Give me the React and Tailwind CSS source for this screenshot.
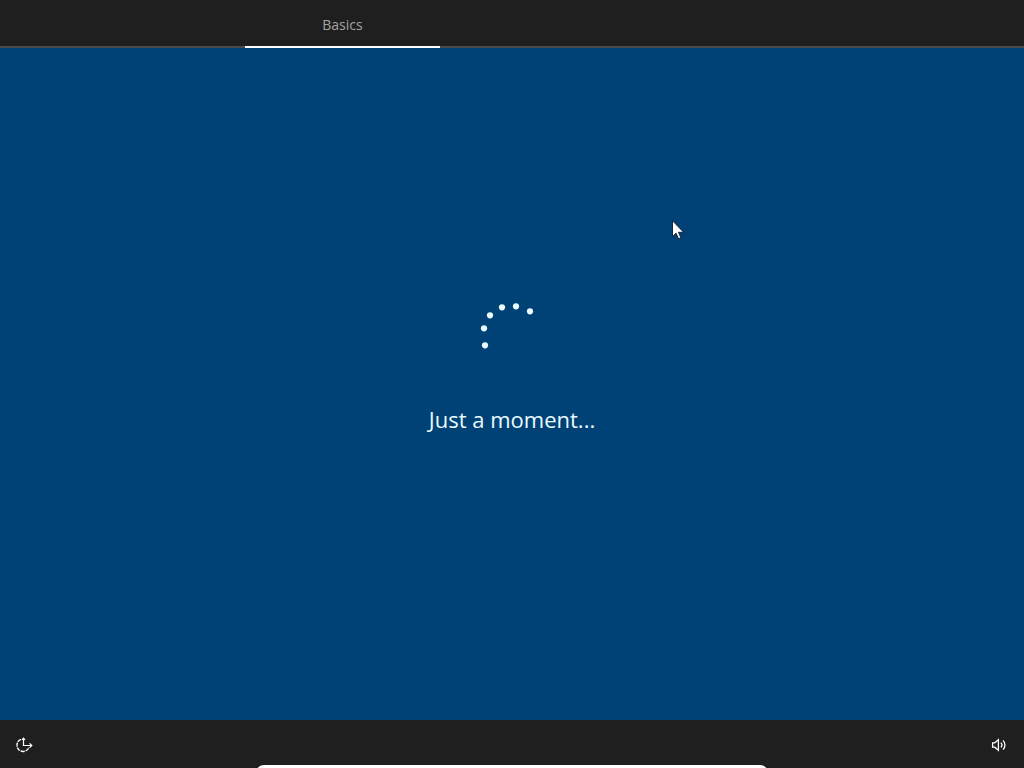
import React from 'react';

const dots = [
    { x: 15, y: 50 },
    { x: 14, y: 33 },
    { x: 20, y: 20 },
    { x: 32, y: 12 },
    { x: 46, y: 11 },
    { x: 60, y: 16 },
];

function Spinner() {
    return (
        <svg className="w-[84px] h-[64px]" viewBox="0 0 84 64" role="status" aria-label="Loading">
            {dots.map((dot) => (
                <circle key={`${dot.x}-${dot.y}`} cx={dot.x} cy={dot.y + 0.3} r="3.1" fill="#e9fbff" />
            ))}
        </svg>
    );
}

function EaseOfAccessIcon() {
    return (
        <svg className="w-[18px] h-[16px]" viewBox="0 0 18 16" fill="none" stroke="#ffffff" strokeWidth="1.4">
            <path d="M6 2.4A6.2 6.2 0 1 0 14 10.2" strokeDasharray="4 0.9" />
            <path d="M8.5 8.5V1.4M7 2.8 8.5 1.2 10 2.8" strokeWidth="1.2" />
            <path d="M7.9 8.5h8.6M14.6 6.3l2.2 2.2-2.2 2.2" strokeWidth="1.2" />
        </svg>
    );
}

function VolumeIcon() {
    return (
        <svg className="w-[16px] h-[14px]" viewBox="0 0 16 14" fill="none" stroke="#ffffff" strokeWidth="1.3">
            <path d="M1.6 4.8h2.2L7.4 1.6v10.8L3.8 9.2H1.6z" />
            <path d="M9.8 4.6a3.4 3.4 0 0 1 0 4.8" />
            <path d="M12 2.4a6.4 6.4 0 0 1 0 9.2" />
        </svg>
    );
}

function Pointer() {
    return (
        <svg className="absolute left-[672px] top-[172px] w-[13px] h-[20px]" viewBox="0 0 13 20">
            <path
                d="M.5 .8v15.8l3.6-3.4 2.4 5.6 2.4-1-2.4-5.5h5.1z"
                fill="#ffffff"
                stroke="#0b1a2b"
                strokeWidth="0.9"
            />
        </svg>
    );
}

export default function App() {
    return (
        <div className="relative h-screen flex flex-col overflow-hidden bg-[#004275] font-['Open_Sans','Noto_Sans',sans-serif]">
            <header className="h-12 shrink-0 bg-[#1f1f1f] border-b-2 border-[#4a4a4a]">
                <nav className="mx-auto w-[534px] h-12 flex">
                    <a
                        href="#basics"
                        aria-current="step"
                        className="w-[195px] h-12 pt-1 flex items-center justify-center border-b-2 border-white text-sm text-[#a3a3a3]"
                    >
                        Basics
                    </a>
                </nav>
            </header>

            <main className="relative flex-1 flex flex-col items-center justify-center gap-11 pb-[38px]">
                <Spinner />
                <h1 className="text-[22px] leading-8 font-normal text-[#e9fbff]">Just a moment...</h1>
                <Pointer />
            </main>

            <footer className="h-12 shrink-0 pt-[2px] pl-[15px] pr-[17px] flex items-center justify-between bg-[#1f1f1f]">
                <button type="button" aria-label="Ease of access">
                    <EaseOfAccessIcon />
                </button>
                <button type="button" aria-label="Volume">
                    <VolumeIcon />
                </button>
            </footer>

            {/* top edge of the sheet waiting below the screen */}
            <div className="absolute bottom-0 inset-x-0 h-[3px] overflow-hidden">
                <div className="mx-auto w-1/2 h-6 rounded-lg bg-white" />
            </div>
        </div>
    );
}
